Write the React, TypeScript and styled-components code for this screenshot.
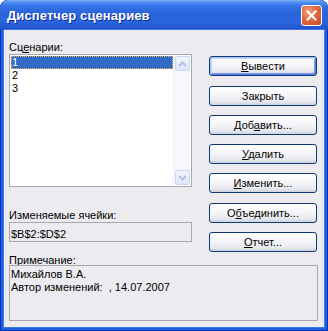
import React from 'react';
import styled, { createGlobalStyle } from 'styled-components';

const Global = createGlobalStyle`
  html, body { margin: 0; padding: 0; background: #ffffff; }
  body { font-family: "Liberation Sans", Arial, sans-serif; font-size: 11px; color: #000; }
`;

const Window = styled.div`
  width: 328px;
  height: 331px;
  box-sizing: border-box;
  display: flex;
  flex-direction: column;
  background: #1d5fe2;
  border-radius: 8px 8px 0 0;
  box-shadow: inset 0 0 0 1px #0b2fb4;
  overflow: hidden;
`;

const TitleBar = styled.div`
  height: 30px;
  flex: none;
  display: flex;
  align-items: center;
  justify-content: space-between;
  padding: 0 6px 0 7px;
  box-sizing: border-box;
  background: linear-gradient(
    to bottom,
    #7fb0f7 0%,
    #4f8ff1 8%,
    #3572e6 20%,
    #2a63da 45%,
    #2b66dc 70%,
    #2559d5 88%,
    #1f4ccb 100%
  );
  border-radius: 8px 8px 0 0;
`;

const Title = styled.span`
  font-family: "Liberation Sans", Arial, sans-serif;
  font-weight: bold;
  font-size: 13px;
  color: #ffffff;
  text-shadow: 1px 1px 0 #0d2a9a;
  letter-spacing: 0.1px;
  margin-top: 1px;
`;

const CloseButton = styled.div`
  width: 21px;
  height: 21px;
  box-sizing: border-box;
  border: 1px solid #ffffff;
  border-radius: 3px;
  background: radial-gradient(circle at 35% 30%, #f0a382 0%, #e0683f 45%, #cc4a22 100%);
  display: flex;
  align-items: center;
  justify-content: center;
  margin-top: 1px;
`;

const Client = styled.div`
  flex: 1;
  margin: 0 4px 4px;
  background: #ecebef;
  padding: 11px 6px 0 5px;
  display: flex;
  flex-direction: column;
  box-shadow: 0 0 0 1px #3b78ec;
`;

const TopRow = styled.div`
  display: flex;
  gap: 17px;
`;

const LeftColumn = styled.div`
  width: 183px;
  display: flex;
  flex-direction: column;
`;

const Label = styled.div<{ $mt?: number; $mb?: number }>`
  line-height: 12px;
  height: 12px;
  margin-top: ${(p) => p.$mt ?? 0}px;
  margin-bottom: ${(p) => p.$mb ?? 1}px;
  white-space: nowrap;
`;

const ListBox = styled.div`
  height: 133px;
  box-sizing: border-box;
  border: 1px solid #a8a7ab;
  background: #ffffff;
  padding: 1px;
  display: flex;
`;

const Items = styled.div`
  flex: 1;
  display: flex;
  flex-direction: column;
`;

const Item = styled.div<{ $selected?: boolean }>`
  height: 13px;
  line-height: 13px;
  padding-left: 1px;
  background: ${(p) => (p.$selected ? '#316ac5' : 'transparent')};
  color: ${(p) => (p.$selected ? '#ffffff' : '#000000')};
  outline: ${(p) => (p.$selected ? '1px dotted #f2b64a' : 'none')};
  outline-offset: -1px;
`;

const ScrollBar = styled.div`
  width: 17px;
  box-sizing: border-box;
  background: #f6f8fd;
  border-left: 1px solid #eef2fb;
  display: flex;
  flex-direction: column;
  justify-content: space-between;
  align-items: center;
`;

const ScrollArrow = styled.div`
  width: 15px;
  height: 15px;
  box-sizing: border-box;
  border: 1px solid #cbd8f4;
  border-radius: 2px;
  background: linear-gradient(to bottom, #f1f5fe, #dde7fb);
  display: flex;
  align-items: center;
  justify-content: center;
`;

const Field = styled.div`
  height: 20px;
  box-sizing: border-box;
  border: 1px solid #a8a7ab;
  padding: 5px 0 0 1px;
  line-height: 12px;
  white-space: nowrap;
`;

const ButtonColumn = styled.div`
  width: 108px;
  padding-top: 15px;
  display: flex;
  flex-direction: column;
  gap: 9px;
`;

const Button = styled.div<{ $default?: boolean; $push?: boolean }>`
  height: 20px;
  box-sizing: border-box;
  margin-top: ${(p) => (p.$push ? 1 : 0)}px;
  border: 1px solid #0f3a78;
  border-radius: 3px;
  background: linear-gradient(to bottom, #ffffff 0%, #f6f6f9 45%, #e8e9ef 80%, #cfd3df 100%);
  box-shadow: ${(p) =>
    p.$default
      ? 'inset 1px 1px 0 #a9c4f4, inset -1px -1px 0 #5d7fe0, inset 2px 2px 0 #c8dbfb, inset -2px -2px 0 #7b98ea'
      : 'none'};
  display: flex;
  align-items: center;
  justify-content: center;
  line-height: 12px;
  white-space: nowrap;
`;

const NotesBox = styled.div`
  height: 56px;
  box-sizing: border-box;
  border: 1px solid #a8a7ab;
  padding: 2px 0 0 1px;
  line-height: 13px;
  white-space: nowrap;
`;

const Up = () => (
  <svg width="9" height="6" viewBox="0 0 9 6">
    <path d="M1 5 L4.5 1.5 L8 5" fill="none" stroke="#b3c3e4" strokeWidth="2" />
  </svg>
);

const Down = () => (
  <svg width="9" height="6" viewBox="0 0 9 6">
    <path d="M1 1 L4.5 4.5 L8 1" fill="none" stroke="#b3c3e4" strokeWidth="2" />
  </svg>
);

export default function App() {
  return (
    <>
      <Global />
      <Window>
        <TitleBar>
          <Title>Диспетчер сценариев</Title>
          <CloseButton>
            <svg width="11" height="11" viewBox="0 0 11 11">
              <path d="M1.5 1.5 L9.5 9.5 M9.5 1.5 L1.5 9.5" stroke="#ffffff" strokeWidth="2" strokeLinecap="square" />
            </svg>
          </CloseButton>
        </TitleBar>
        <Client>
          <TopRow>
            <LeftColumn>
              <Label>
                Сц<u>е</u>нарии:
              </Label>
              <ListBox>
                <Items>
                  <Item $selected>1</Item>
                  <Item>2</Item>
                  <Item>3</Item>
                </Items>
                <ScrollBar>
                  <ScrollArrow>
                    <Up />
                  </ScrollArrow>
                  <ScrollArrow>
                    <Down />
                  </ScrollArrow>
                </ScrollBar>
              </ListBox>
              <Label $mt={22}>Изменяемые ячейки:</Label>
              <Field>$B$2:$D$2</Field>
            </LeftColumn>
            <ButtonColumn>
              <Button $default>
                <span>
                  <u>В</u>ывести
                </span>
              </Button>
              <Button $push>Закрыть</Button>
              <Button>
                <span>
                  Доб<u>а</u>вить...
                </span>
              </Button>
              <Button>
                <span>
                  <u>У</u>далить
                </span>
              </Button>
              <Button>
                <span>
                  <u>И</u>зменить...
                </span>
              </Button>
              <Button $push>
                <span>
                  О<u>б</u>ъединить...
                </span>
              </Button>
              <Button>
                <span>
                  <u>О</u>тчет...
                </span>
              </Button>
            </ButtonColumn>
          </TopRow>
          <Label $mt={2} $mb={-1}>
            Примечание:
          </Label>
          <NotesBox>
            Михайлов В.А.
            <br />
            Автор изменений:&nbsp; , 14.07.2007
          </NotesBox>
        </Client>
      </Window>
    </>
  );
}
